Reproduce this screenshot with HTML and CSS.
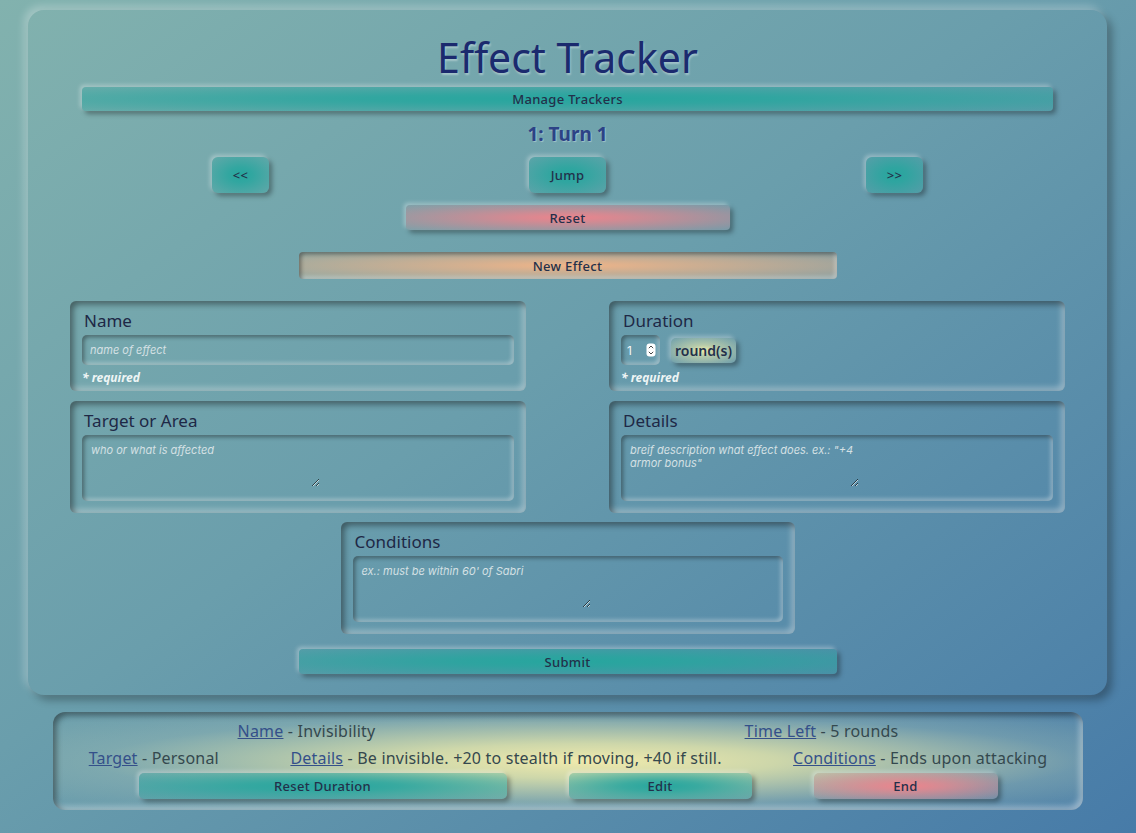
FILE: index.html
```html
<!DOCTYPE html>
<html lang="en">
<head>
<meta charset="utf-8">
<title>Effect Tracker</title>
<link rel="stylesheet" href="styles.css">
</head>
<body>
<main class="card">
  <h1 class="title">Effect Tracker</h1>
  <button class="btn teal manage">Manage Trackers</button>
  <h2 class="turn">1: Turn 1</h2>
  <div class="nav">
    <button class="btn teal step">&lt;&lt;</button>
    <button class="btn teal jump">Jump</button>
    <button class="btn teal step">&gt;&gt;</button>
  </div>
  <button class="btn pink reset">Reset</button>
  <button class="btn orange sunken newfx">New Effect</button>
  <form class="form">
    <div class="grid">
      <div class="panel short">
        <label class="label">Name</label>
        <input class="field text" placeholder="name of effect">
        <div class="req">* required</div>
      </div>
      <div class="panel short">
        <label class="label">Duration</label>
        <div class="dur">
          <div class="num">
            <span class="num-val">1</span>
            <svg class="spin" width="10" height="14" viewBox="0 0 10 14"><rect x="0.5" y="0.5" width="9" height="13" rx="3" fill="#fff"/><path d="M2.8 5.2 L5 3 L7.2 5.2" fill="none" stroke="#333" stroke-width="0.9"/><path d="M2.8 8.8 L5 11 L7.2 8.8" fill="none" stroke="#333" stroke-width="0.9"/></svg>
          </div>
          <button type="button" class="btn yellow unit">round(s)</button>
        </div>
        <div class="req">* required</div>
      </div>
      <div class="panel tall">
        <label class="label">Target or Area</label>
        <div class="well"><textarea class="area" placeholder="who or what is affected"></textarea></div>
      </div>
      <div class="panel tall">
        <label class="label">Details</label>
        <div class="well"><textarea class="area" placeholder="breif description what effect does. ex.: &quot;+4 armor bonus&quot;"></textarea></div>
      </div>
    </div>
    <div class="panel tall cond">
      <label class="label">Conditions</label>
      <div class="well"><textarea class="area" placeholder="ex.: must be within 60' of Sabri"></textarea></div>
    </div>
    <button type="button" class="btn teal submit">Submit</button>
  </form>
</main>
<section class="effect">
  <div class="row">
    <span class="item"><a class="key" href="#">Name</a> - Invisibility</span>
    <span class="item"><a class="key" href="#">Time Left</a> - 5 rounds</span>
  </div>
  <div class="row">
    <span class="item"><a class="key" href="#">Target</a> - Personal</span>
    <span class="item"><a class="key" href="#">Details</a> - Be invisible. +20 to stealth if moving, +40 if still.</span>
    <span class="item"><a class="key" href="#">Conditions</a> - Ends upon attacking</span>
  </div>
  <div class="actions">
    <button class="btn teal rd">Reset Duration</button>
    <button class="btn teal edit">Edit</button>
    <button class="btn pink end">End</button>
  </div>
</section>
</body>
</html>
```

FILE: styles.css
```css
html {
  min-height: 100%;
  background: linear-gradient(to bottom right, #82b2ae 0%, #6a9eac 45%, #477ba8 100%);
}
body {
  margin: 0;
  padding: 10px 29px 23px 28px;
  font-family: "Noto Sans", "Open Sans", sans-serif;
  color: #1e2846;
}
.card {
  border-radius: 16px;
  padding: 23px 0 21px;
  box-shadow: -4px -4px 8px rgba(255,255,255,0.28), 5px 5px 9px rgba(0,0,0,0.3);
  display: flex;
  flex-direction: column;
  align-items: center;
}
.title {
  margin: 0;
  font-size: 41px;
  line-height: 48px;
  font-weight: 400;
  color: #1b2a6e;
  text-shadow: 1px 2px 2px rgba(255,255,255,0.35);
}
.btn {
  font-family: "Noto Sans", "Open Sans", sans-serif;
  font-size: 13px;
  font-weight: 500;
  color: #23304a;
  border: none;
  padding: 0;
  border-radius: 4px;
  cursor: pointer;
  box-shadow: -2px -2px 4px rgba(255,255,255,0.35), 3px 3px 5px rgba(0,0,0,0.35);
  letter-spacing: 0.3px;
}
.teal { background: radial-gradient(ellipse, rgba(38,166,158,1) 0%, rgba(38,166,158,0.85) 30%, rgba(38,166,158,0.25) 100%); }
.pink { background: radial-gradient(ellipse, rgba(236,132,140,1) 0%, rgba(236,132,140,0.8) 25%, rgba(236,132,140,0.1) 100%); }
.orange { background: radial-gradient(ellipse, rgba(240,180,136,1) 0%, rgba(240,180,136,0.8) 25%, rgba(240,180,136,0.25) 100%); }
.yellow { background: radial-gradient(ellipse, rgba(238,236,170,1) 0%, rgba(238,236,170,0.6) 30%, rgba(238,236,170,0.05) 100%); }
.sunken {
  box-shadow: inset 2px 2px 4px rgba(0,0,0,0.4), inset -2px -2px 4px rgba(255,255,255,0.4);
}
.manage {
  align-self: stretch;
  margin: 6px 54px 0;
  height: 24px;
}
.turn {
  margin: 11px 0 0;
  font-size: 19px;
  line-height: 24px;
  font-weight: 700;
  color: #2c4286;
  text-shadow: 1px 1px 1px rgba(255,255,255,0.35);
}
.nav {
  align-self: stretch;
  margin: 11px 54px 0;
  display: flex;
  justify-content: space-around;
}
.nav .btn {
  height: 36px;
  border-radius: 6px;
}
.step { width: 57px; }
.jump { width: 77px; }
.reset {
  margin-top: 12px;
  width: 324px;
  height: 25px;
}
.newfx {
  margin-top: 22px;
  width: 538px;
  height: 27px;
}
.form {
  align-self: stretch;
  margin: 22px 42px 0;
  display: flex;
  flex-direction: column;
  align-items: center;
}
.grid {
  align-self: stretch;
  display: grid;
  grid-template-columns: 1fr 1fr;
  column-gap: 83px;
  row-gap: 10px;
}
.panel {
  border-radius: 6px;
  padding: 9px 12px 0;
  box-shadow: inset 3px 3px 6px rgba(0,0,0,0.45), inset -3px -3px 6px rgba(255,255,255,0.4);
  display: flex;
  flex-direction: column;
  box-sizing: border-box;
}
.short { height: 90px; }
.tall { height: 112px; }
.label {
  font-size: 17px;
  line-height: 22px;
  margin-left: 2px;
  color: #1e2846;
}
.field, .well {
  border-radius: 5px;
  box-shadow: inset 2px 2px 4px rgba(0,0,0,0.4), inset -2px -2px 4px rgba(255,255,255,0.4);
}
.text {
  margin-top: 3px;
  height: 30px;
  border: none;
  background: transparent;
  padding: 0 8px;
  font-family: "Inter", sans-serif;
  font-size: 11px;
  font-style: italic;
  color: #fff;
  outline: none;
}
.text::placeholder, .area::placeholder {
  color: #d4e0e4;
  font-style: italic;
}
.req {
  margin-top: 5px;
  font-size: 12px;
  line-height: 16px;
  font-weight: 700;
  font-style: italic;
  color: #eef5f5;
}
.dur {
  margin-top: 3px;
  display: flex;
  align-items: center;
  gap: 11px;
}
.num {
  width: 39px;
  height: 30px;
  border-radius: 5px;
  box-shadow: inset 2px 2px 4px rgba(0,0,0,0.4), inset -2px -2px 4px rgba(255,255,255,0.4);
  display: flex;
  align-items: center;
  justify-content: space-between;
  padding: 0 4px 0 6px;
  box-sizing: border-box;
}
.num-val {
  font-family: "Inter", sans-serif;
  font-size: 12px;
  color: #f4f8f8;
}
.unit {
  width: 65px;
  height: 25px;
  font-size: 14px;
  font-weight: 600;
  border-radius: 5px;
  letter-spacing: 0;
}
.well {
  margin-top: 3px;
  height: 66px;
  display: flex;
}
.area {
  width: 238px;
  height: 52px;
  box-sizing: border-box;
  border: none;
  background: transparent;
  padding: 9px 2px 0 9px;
  font-family: "Inter", sans-serif;
  font-size: 11px;
  line-height: 13px;
  color: #fff;
  outline: none;
}
.cond {
  width: 454px;
  margin-top: 9px;
}
.submit {
  margin-top: 15px;
  width: 538px;
  height: 25px;
}
.effect {
  margin: 17px 24px 0 25px;
  height: 98px;
  box-sizing: border-box;
  padding: 8px 0 0;
  border-radius: 12px;
  background: radial-gradient(ellipse at 52% 50%, rgba(240,234,172,1) 0%, rgba(226,228,170,0.85) 25%, rgba(160,190,180,0.4) 65%, rgba(120,160,170,0) 100%);
  box-shadow: inset 3px 3px 6px rgba(0,0,0,0.45), inset -3px -3px 6px rgba(255,255,255,0.45);
  font-size: 16px;
  letter-spacing: 0.2px;
  color: #34484e;
}
.row {
  display: flex;
  justify-content: space-around;
  line-height: 22px;
}
.row + .row { margin-top: 5px; }
.key {
  color: #34508a;
  text-decoration: underline;
}
.actions {
  margin-top: 4px;
  display: flex;
  justify-content: center;
  gap: 62px;
}
.actions .btn {
  height: 26px;
  border-radius: 5px;
}
.rd { width: 368px; }
.edit { width: 183px; }
.end { width: 184px; }
```
